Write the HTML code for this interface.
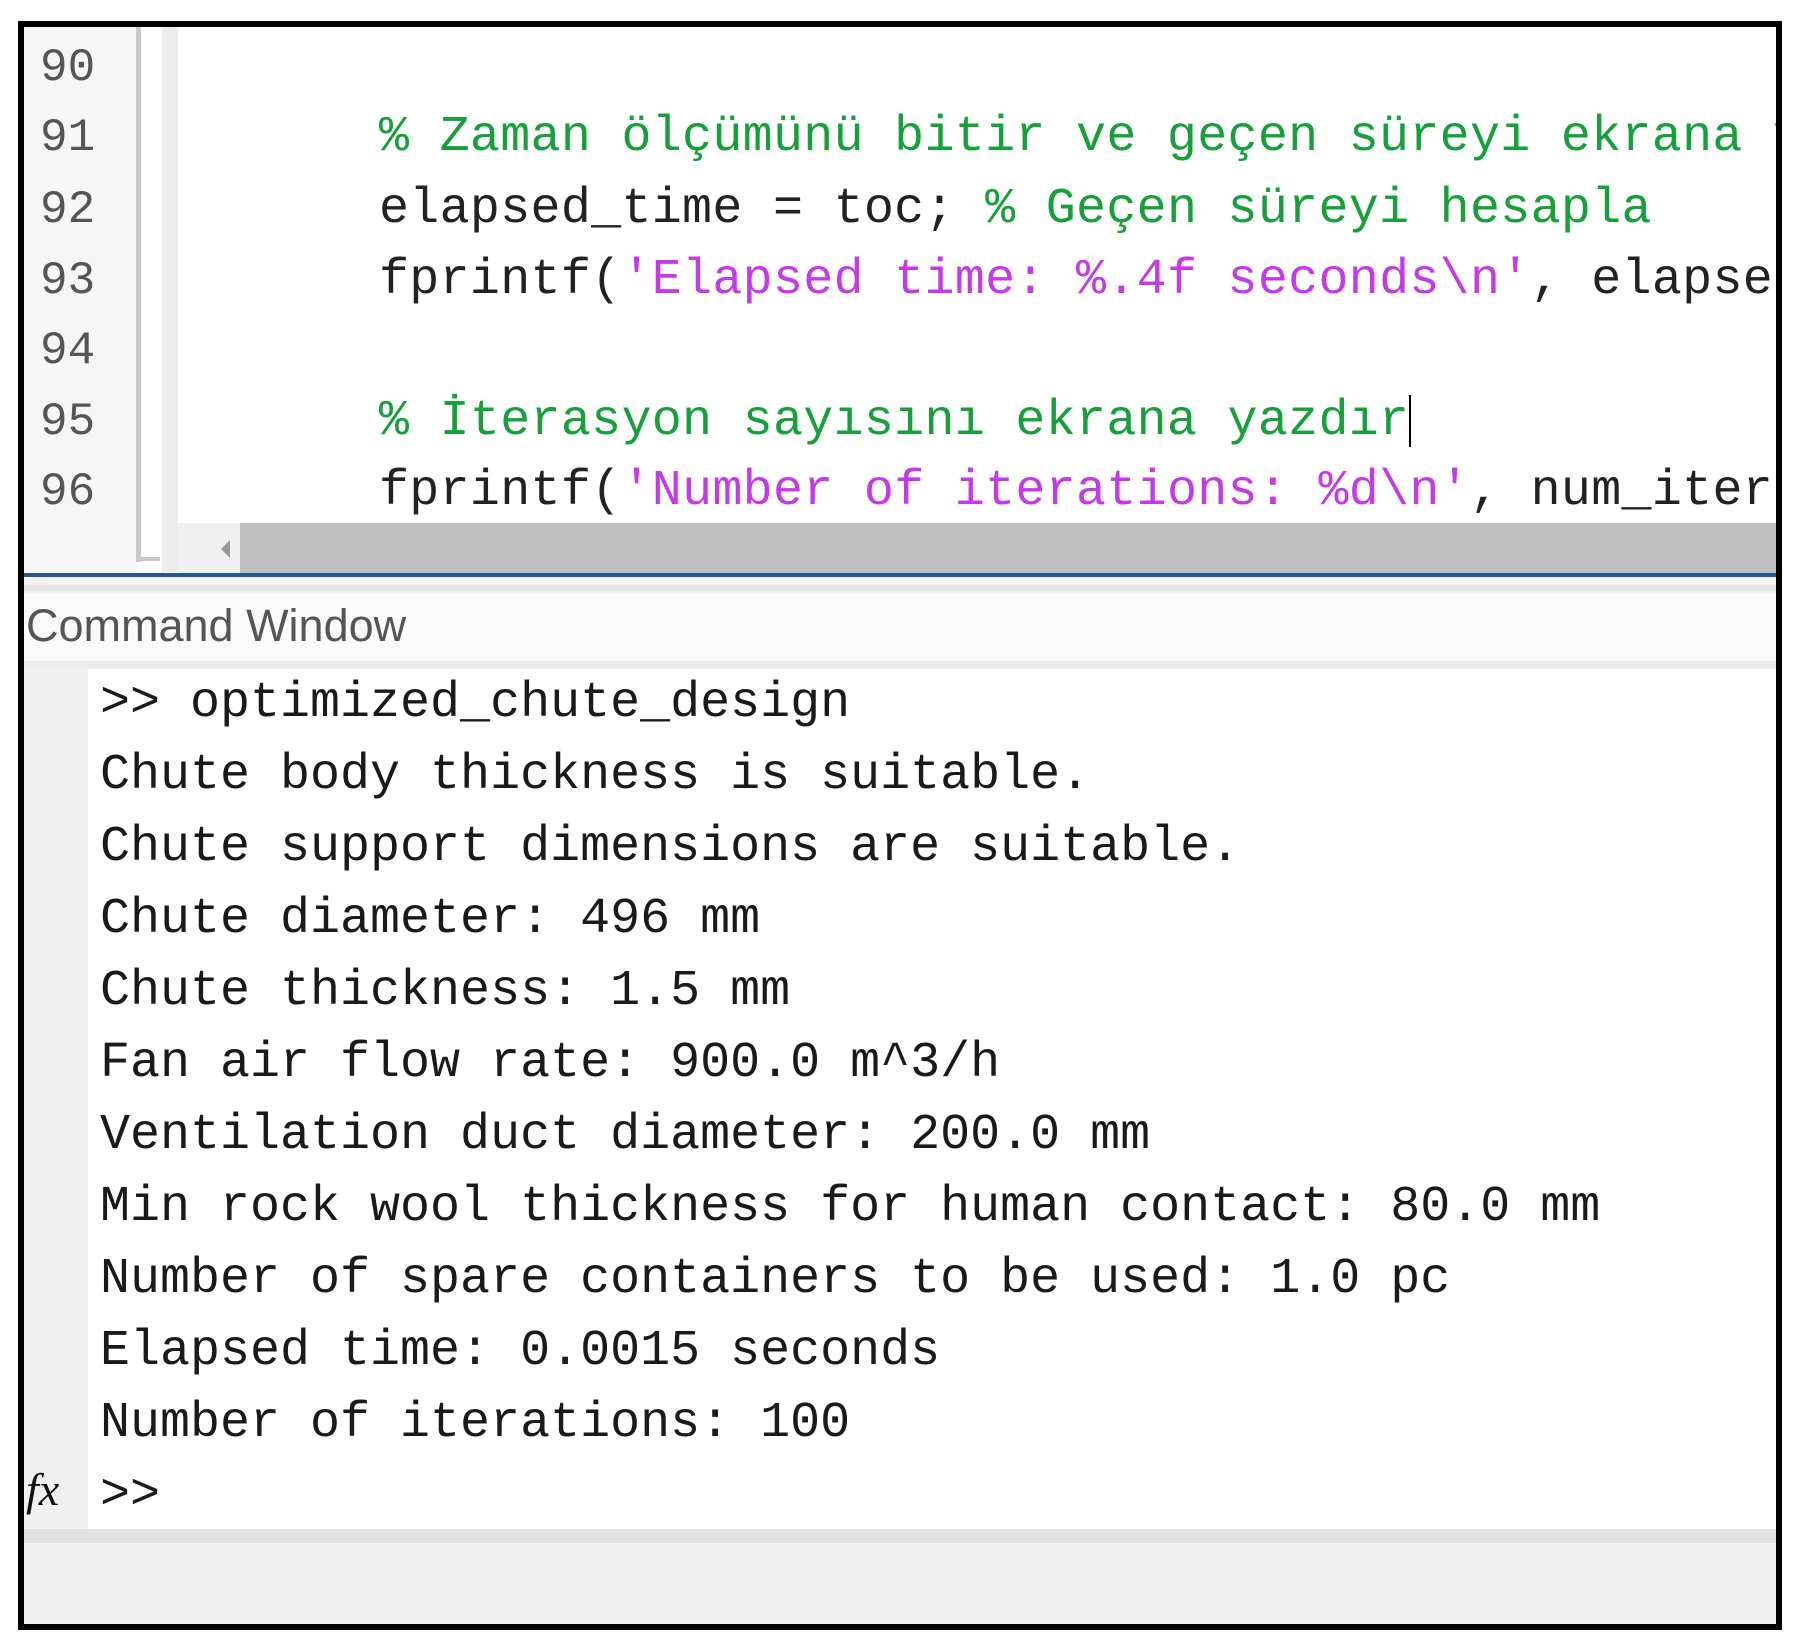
<!DOCTYPE html>
<html><head><meta charset="utf-8"><style>
*{margin:0;padding:0;box-sizing:border-box}
html,body{width:1800px;height:1649px;background:#fff;overflow:hidden}
#box{position:absolute;left:18px;top:21px;width:1764px;height:1609px;border:6px solid #000;overflow:hidden;background:#fff}
.abs{position:absolute}
.mono{font-family:"Liberation Mono","DejaVu Sans Mono",monospace;white-space:pre}
.ln{position:absolute;left:16px;font-size:46px;color:#555;line-height:72px;font-family:"Liberation Mono",monospace}
.cl{position:absolute;left:355px;font-size:50px;line-height:72px;color:#222;letter-spacing:0.3px}
.c{color:#16a03a}.s{color:#c43ae8}
.ol{position:absolute;left:76px;font-size:50px;line-height:72px;color:#1a1a1a}
</style></head><body>
<div id="box">
 <div class="abs" style="left:0;top:0;width:112px;height:545px;background:#f6f6f6"></div>
 <div class="abs" style="left:112px;top:0;width:5px;height:535px;background:#c8c8c8"></div>
 <div class="abs" style="left:112px;top:530px;width:24px;height:4px;background:#c8c8c8"></div>
 <div class="abs" style="left:138px;top:0;width:16px;height:545px;background:#ececec"></div>
 <div class="ln" style="top:5px">90</div>
 <div class="ln" style="top:75px">91</div>
 <div class="ln" style="top:147px">92</div>
 <div class="ln" style="top:218px">93</div>
 <div class="ln" style="top:288px">94</div>
 <div class="ln" style="top:359px">95</div>
 <div class="ln" style="top:429px">96</div>
 <div class="cl mono" style="top:75px"><span class="c">% Zaman ölçümünü bitir ve geçen süreyi ekrana yazdır</span></div>
 <div class="cl mono" style="top:147px">elapsed_time = toc; <span class="c">% Geçen süreyi hesapla</span></div>
 <div class="cl mono" style="top:218px">fprintf(<span class="s">'Elapsed time: %.4f seconds\n'</span>, elapsed_time);</div>
 <div class="cl mono" style="top:359px"><span class="c">% İterasyon sayısını ekrana yazdır</span><span style="display:inline-block;width:2px;height:52px;background:#000;vertical-align:middle"></span></div>
 <div class="cl mono" style="top:429px">fprintf(<span class="s">'Number of iterations: %d\n'</span>, num_iterations);</div>
 <div class="abs" style="left:154px;top:496px;width:1610px;height:51px;background:#f0f0f0"></div>
 <div class="abs" style="left:197px;top:513px;width:0;height:0;border-top:9px solid transparent;border-bottom:9px solid transparent;border-right:9px solid #999"></div>
 <div class="abs" style="left:216px;top:496px;width:1550px;height:51px;background:#c0c0c0"></div>
 <div class="abs" style="left:0;top:546px;width:1764px;height:4px;background:#22598f"></div>
 <div class="abs" style="left:0;top:550px;width:1764px;height:16px;background:#f3f3f3"></div>
 <div class="abs" style="left:0;top:558px;width:1764px;height:6px;background:#e4e4e4"></div>
 <div class="abs" style="left:0;top:566px;width:1764px;height:68px;background:#fafafa"></div>
 <div class="abs" style="left:2px;top:569px;font-family:'Liberation Sans',sans-serif;font-size:45px;line-height:60px;color:#555">Command Window</div>
 <div class="abs" style="left:0;top:634px;width:1764px;height:8px;background:#ececec"></div>
 <div class="abs" style="left:0;top:642px;width:64px;height:860px;background:#f0f0f0"></div>
 <div class="ol mono" style="top:641px">&gt;&gt; optimized_chute_design</div>
 <div class="ol mono" style="top:713px">Chute body thickness is suitable.</div>
 <div class="ol mono" style="top:785px">Chute support dimensions are suitable.</div>
 <div class="ol mono" style="top:857px">Chute diameter: 496 mm</div>
 <div class="ol mono" style="top:929px">Chute thickness: 1.5 mm</div>
 <div class="ol mono" style="top:1001px">Fan air flow rate: 900.0 m^3/h</div>
 <div class="ol mono" style="top:1073px">Ventilation duct diameter: 200.0 mm</div>
 <div class="ol mono" style="top:1145px">Min rock wool thickness for human contact: 80.0 mm</div>
 <div class="ol mono" style="top:1217px">Number of spare containers to be used: 1.0 pc</div>
 <div class="ol mono" style="top:1289px">Elapsed time: 0.0015 seconds</div>
 <div class="ol mono" style="top:1361px">Number of iterations: 100</div>
 <div class="ol mono" style="top:1433px">&gt;&gt;</div>
 <div class="abs" style="left:2px;top:1428px;font-family:'Liberation Serif',serif;font-style:italic;font-size:46px;line-height:70px;color:#111">fx</div>
 <div class="abs" style="left:0;top:1502px;width:1764px;height:14px;background:#e2e2e2"></div>
 <div class="abs" style="left:0;top:1516px;width:1764px;height:90px;background:#f0f0f0"></div>
 <div class="abs" style="left:0;top:1598px;width:1764px;height:5px;background:#fbe6d6"></div>
 <div class="abs" style="left:350px;top:1598px;width:184px;height:5px;background:#f6c39a"></div>
</div>
</body></html>
